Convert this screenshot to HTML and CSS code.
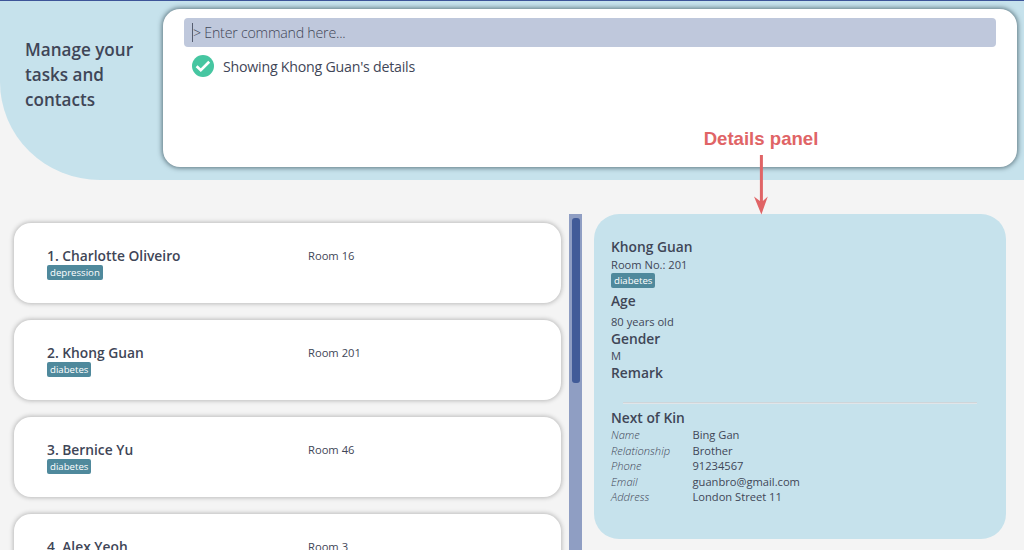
FILE: index.html
```html
<!DOCTYPE html>
<html lang="en">
<head>
<meta charset="utf-8">
<title>Tasks and contacts</title>
<link rel="stylesheet" href="styles.css">
</head>
<body>
<div class="app">
  <header class="header">
    <h1 class="title">Manage your<br>tasks and<br>contacts</h1>
    <section class="console">
      <div class="command"><span class="caret"></span><span class="prompt">&gt; Enter command here...</span></div>
      <div class="result">
        <svg class="check" viewBox="0 0 22 22"><circle cx="11" cy="11" r="11" fill="#46c6a1"/><path d="M4.6 11.2 L8.8 15.2 L17.2 6.8" fill="none" stroke="#fff" stroke-width="2.7"/></svg>
        <span class="message">Showing Khong Guan's details</span>
      </div>
    </section>
  </header>
  <main class="main">
    <div class="list">
      <article class="card"><div class="person"><h2 class="name">1. Charlotte Oliveiro</h2><span class="tag">depression</span></div><span class="room">Room 16</span></article>
      <article class="card"><div class="person"><h2 class="name">2. Khong Guan</h2><span class="tag">diabetes</span></div><span class="room">Room 201</span></article>
      <article class="card"><div class="person"><h2 class="name">3. Bernice Yu</h2><span class="tag">diabetes</span></div><span class="room">Room 46</span></article>
      <article class="card"><div class="person"><h2 class="name">4. Alex Yeoh</h2></div><span class="room">Room 3</span></article>
    </div>
    <div class="scrollbar"><div class="thumb"></div></div>
    <section class="details">
      <h2 class="heading">Khong Guan</h2>
      <p class="text room-number">Room No.: 201</p>
      <span class="tag">diabetes</span>
      <h3 class="heading age">Age</h3>
      <p class="text">80 years old</p>
      <h3 class="heading">Gender</h3>
      <p class="text">M</p>
      <h3 class="heading">Remark</h3>
      <hr class="divider">
      <h3 class="heading">Next of Kin</h3>
      <dl class="kin">
        <dt>Name</dt><dd>Bing Gan</dd>
        <dt>Relationship</dt><dd>Brother</dd>
        <dt>Phone</dt><dd>91234567</dd>
        <dt>Email</dt><dd>guanbro@gmail.com</dd>
        <dt>Address</dt><dd>London Street 11</dd>
      </dl>
    </section>
  </main>
  <div class="callout">
    <span class="callout-label">Details panel</span>
    <svg class="arrow" viewBox="0 0 16 60"><path d="M6.9 0h3v46l4.9-4.5L8.4 59.5 1 41.5l5.9 4.5z" fill="#e06466"/></svg>
  </div>
</div>
</body>
</html>
```
FILE: styles.css
```css
* { box-sizing: border-box; margin: 0; padding: 0; }
body { background: #f4f4f4; color: #3f4657; font-family: "Open Sans", sans-serif; overflow: hidden; }
.app { position: relative; width: 1024px; height: 550px; overflow: hidden; }

.header { display: flex; height: 180px; padding: 8px 7px 0 25px; border-top: 1px solid #3d5599; background: #c6e2ec; border-bottom-left-radius: 100px 98px; }
.title { width: 137.5px; padding-top: 27.5px; font-size: 17.1px; line-height: 25px; font-weight: 600; white-space: nowrap; }
.console { flex: 1; height: 158px; padding: 9px 21.5px 0; background: #fff; border-radius: 17px; box-shadow: 0 0 5px 1px #5b747e; }
.command { display: flex; align-items: center; height: 29px; padding-left: 8px; background: #bfc8dc; border-radius: 4px; font-size: 14.2px; font-weight: 300; }
.caret { width: 1px; height: 19px; background: #555d70; }
.prompt { letter-spacing: -0.22px; }
.result { display: flex; align-items: center; gap: 9px; height: 22px; margin-top: 8px; padding-left: 8px; font-size: 14.2px; }
.message { letter-spacing: -0.23px; }
.check { width: 22px; height: 22px; }

.main { display: flex; height: 370px; padding-top: 34px; }
.list { display: flex; flex-direction: column; gap: 17px; width: 569px; padding: 9px 8.5px 0 14px; }
.card { display: flex; flex: none; height: 80px; padding: 24px 33px 0; background: #fff; border-radius: 17px; box-shadow: 0 0 4px 1px #bbb; }
.person { width: 261px; }
.name { margin-top: -1px; font-size: 13.8px; line-height: 19px; font-weight: 600; }
.tag { display: block; width: fit-content; height: 15px; padding: 0 3px; border-radius: 2px; background: #4f899c; color: #fff; font-size: 9.65px; line-height: 15px; font-weight: 500; }
.room { margin-top: -1px; font-size: 11.2px; line-height: 19px; }
.scrollbar { width: 13px; padding: 4px 2px 0 3px; background: #8f9ec3; }
.thumb { height: 165px; background: #415b98; border-radius: 3px; }
.details { width: 412px; height: 325px; margin-left: 12px; padding: 23px 17px 0; background: #c6e2ec; border-radius: 25px; }
.heading { font-size: 13.8px; line-height: 19px; font-weight: 600; }
.text { font-size: 11.15px; line-height: 15px; }
.room-number { margin: 1px 0; }
.age { margin: 3px 0 4px; }
.divider { height: 2px; margin: 20px 12px 4px; border: 0; background: linear-gradient(#cfd5d9 50%, #e0e5e9 50%); }
.kin { display: grid; grid-template-columns: 81.5px 1fr; font-size: 11.15px; line-height: 15.5px; }
.kin dt { font-style: italic; font-weight: 300; }

.callout { position: absolute; left: 691px; top: 128px; width: 140px; display: flex; flex-direction: column; align-items: center; }
.callout-label { color: #e06466; font: bold 18.6px/22px "Liberation Sans", sans-serif; white-space: nowrap; }
.arrow { width: 16px; height: 60px; margin-top: 5px; }
```
